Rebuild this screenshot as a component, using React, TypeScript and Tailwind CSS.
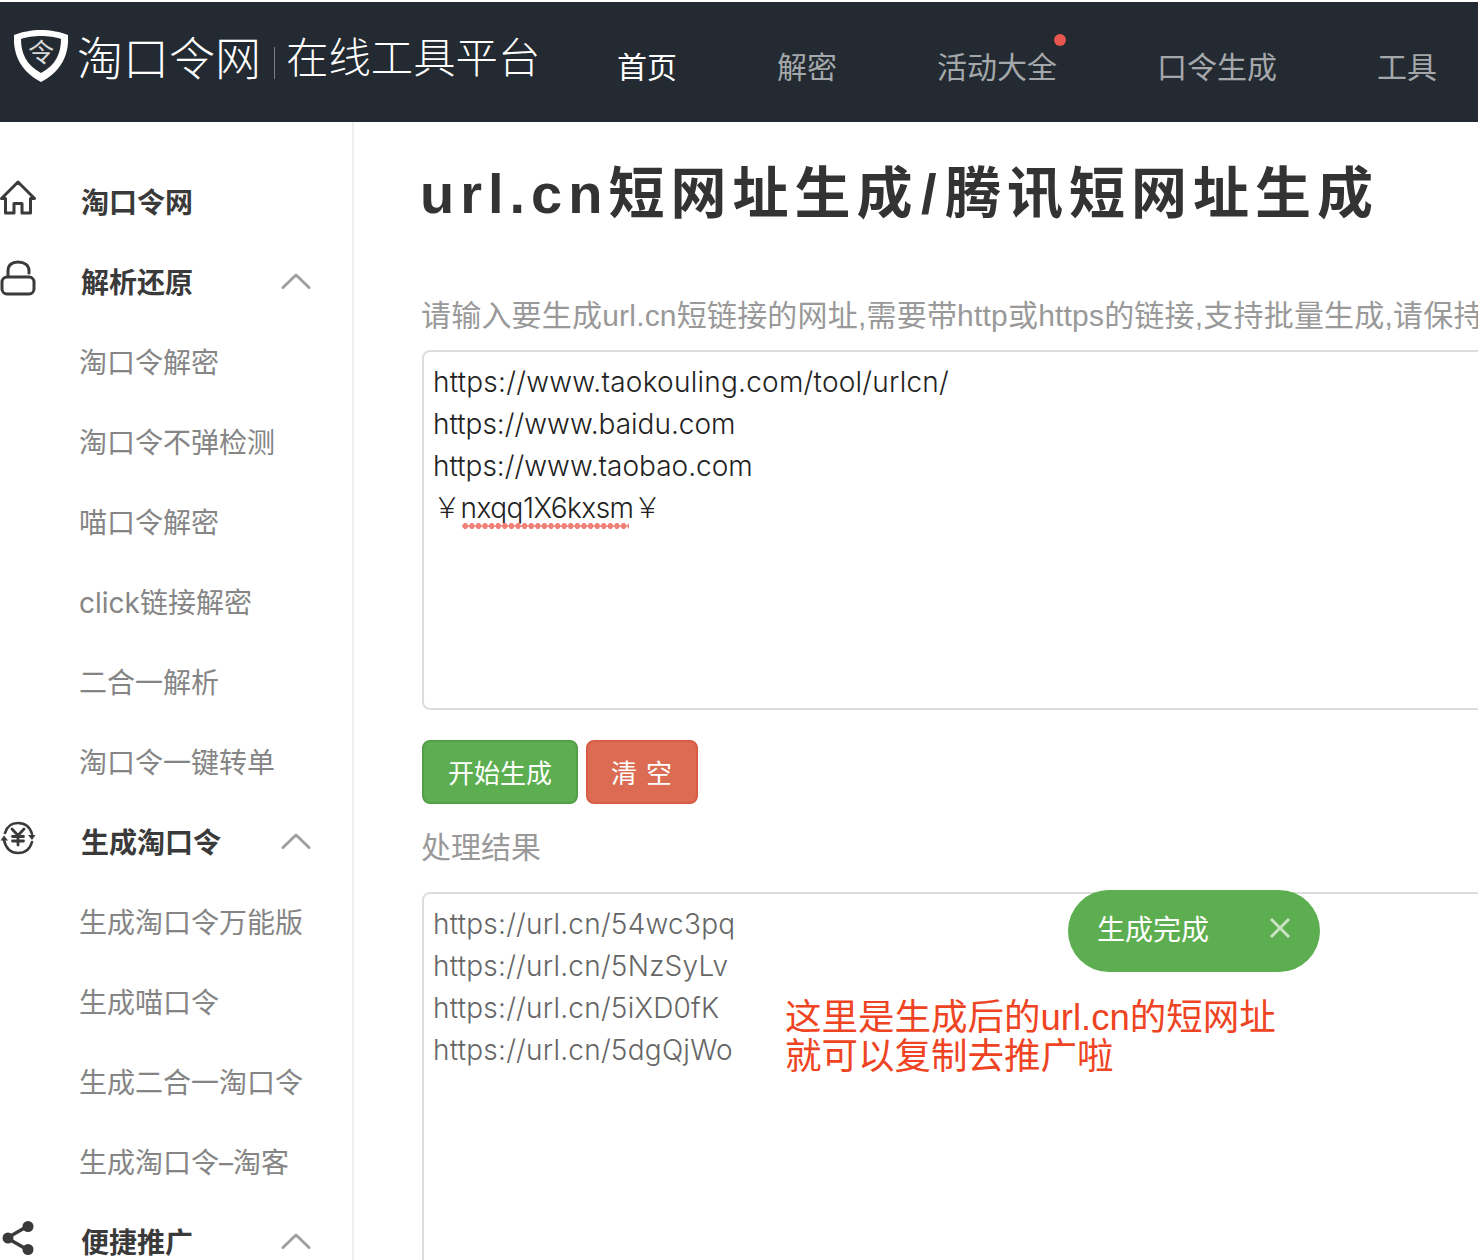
import React from 'react';

const FONT = "font-['Liberation_Sans','Noto_Sans_CJK_SC',sans-serif]";
const LATIN_WIDE = "font-['Inter','Noto_Sans_CJK_SC',sans-serif]";

function HomeIcon() {
  return (
    <svg viewBox="0 0 36 36" className="h-9 w-9" fill="none" stroke="#3a3a3a" strokeWidth="3" strokeLinejoin="round" strokeLinecap="round">
      <path d="M1.5 18.5 L18 2 L34.5 18.5 L30.5 18.5 L30.5 33 L22 33 L22 23.5 L14 23.5 L14 33 L5.5 33 L5.5 18.5 Z" />
    </svg>
  );
}

function LockIcon() {
  return (
    <svg viewBox="0 0 36 36" className="h-9 w-9" fill="none" stroke="#3a3a3a" strokeWidth="3" strokeLinecap="round">
      <rect x="2" y="17" width="32" height="17" rx="5" />
      <path d="M8 16 V11 C8 5 12 2 18 2 C24 2 29 5 29 11 V13" />
    </svg>
  );
}

function YenIcon() {
  return (
    <svg viewBox="0 0 36 36" className="h-9 w-9" fill="none" stroke="#3a3a3a" strokeWidth="2.6" strokeLinecap="round">
      <path d="M5 13 C7 6 12 3 18 3 C25 3 30 7 32 14" />
      <path d="M32 22 C30 29 25 33 18 33 C11 33 6 29 4 20" />
      <path d="M0.5 20.5 H8 L4 15.5 Z M28 15 H35.5 L32 20 Z" fill="#3a3a3a" stroke="none" />
      <path d="M12 9 L18 15.5 L24 9 M18 15.5 V25 M12.5 16.5 H23.5 M12.5 21 H23.5" strokeWidth="2.8" />
    </svg>
  );
}

function ShareIcon() {
  return (
    <svg viewBox="0 0 36 36" className="h-9 w-9" fill="#3a3a3a" stroke="#3a3a3a">
      <path d="M7 18 L28 6 M7 18 L28 30" strokeWidth="3.4" fill="none" />
      <circle cx="8" cy="18" r="5.5" stroke="none" />
      <circle cx="28" cy="6.5" r="5.5" stroke="none" />
      <circle cx="28" cy="29.5" r="5.5" stroke="none" />
    </svg>
  );
}

function Chevron() {
  return (
    <svg viewBox="0 0 30 16" className="h-4 w-[30px]" fill="none" stroke="#a0a0a0" strokeWidth="3" strokeLinecap="round" strokeLinejoin="round">
      <path d="M2 14.5 L15 2 L28 14.5" />
    </svg>
  );
}

function LogoShield() {
  return (
    <svg viewBox="0 0 54 54" className="mb-[6px] h-[54px] w-[54px] shrink-0">
      <path d="M27 1 C36 1 47 3 54 6 C55 22 50 41 27 53 C4 41 -1 22 0 6 C7 3 18 1 27 1 Z" fill="#fff" />
      <path d="M27 7 C34 7 42 8 47 10 C47 24 42 36 27 44 C12 36 7 24 7 10 C12 8 20 7 27 7 Z" fill="#232a31" />
      <text x="27" y="33" textAnchor="middle" fontSize="26" fill="#d8d8d8" fontFamily="'Noto Sans CJK SC'">令</text>
    </svg>
  );
}

const NAV = [
  { label: '首页', active: true },
  { label: '解密' },
  { label: '活动大全', dot: true },
  { label: '口令生成' },
  { label: '工具' },
];

function Header() {
  return (
    <header className="flex h-[120px] items-center overflow-hidden bg-[#232a31]">
      <div className="flex w-[617px] shrink-0 items-center pl-[14px] pb-[6px]">
        <LogoShield />
        <span className="ml-[9px] whitespace-nowrap text-[46px] font-light leading-none text-white">淘口令网</span>
        <span className="ml-[13px] mr-[11px] mt-2 h-8 w-px bg-[#7b8085]" />
        <span className="whitespace-nowrap text-[42.4px] font-light leading-none text-white">在线工具平台</span>
      </div>
      <nav className="flex items-center gap-[100px] pt-3">
        {NAV.map(item => (
          <span
            key={item.label}
            className={`relative whitespace-nowrap text-[30px] leading-[40px] ${item.active ? 'text-white' : 'text-[#a5a8ab]'}`}
          >
            {item.label}
            {item.dot && <i className="absolute right-[-9px] top-[-14px] h-3 w-3 rounded-full bg-[#e8574e]" />}
          </span>
        ))}
      </nav>
    </header>
  );
}

function GroupRow({ icon, label, open }: { icon: React.ReactNode; label: string; open?: boolean }) {
  return (
    <div className="flex h-20 items-center">
      <span className="mb-3 flex w-[81px] shrink-0 items-center">{icon}</span>
      <span className="flex-1 whitespace-nowrap text-[28px] font-bold text-[#3a3a3a]">{label}</span>
      {open && <span className="mb-[6px] mr-[41px] flex"><Chevron /></span>}
    </div>
  );
}

function SubRow({ label }: { label: string }) {
  return <div className={`${LATIN_WIDE} flex h-20 items-center whitespace-nowrap pb-[2px] pl-[79px] text-[28px] text-[#858585]`}>{label}</div>;
}

function Sidebar() {
  return (
    <aside className="h-full w-[354px] shrink-0 border-r-2 border-[#eeeeee] pt-[42px]">
      <GroupRow icon={<HomeIcon />} label="淘口令网" />
      <GroupRow icon={<LockIcon />} label="解析还原" open />
      {['淘口令解密', '淘口令不弹检测', '喵口令解密', 'click链接解密', '二合一解析', '淘口令一键转单'].map(s => (
        <SubRow key={s} label={s} />
      ))}
      <GroupRow icon={<YenIcon />} label="生成淘口令" open />
      {['生成淘口令万能版', '生成喵口令', '生成二合一淘口令', '生成淘口令–淘客'].map(s => (
        <SubRow key={s} label={s} />
      ))}
      <GroupRow icon={<ShareIcon />} label="便捷推广" open />
    </aside>
  );
}

function Main() {
  return (
    <main className="relative min-w-0 flex-1 overflow-hidden pl-[68px]">
      <h1 className="-ml-[2px] mt-[42px] h-[60px] whitespace-nowrap text-[56px] font-bold leading-[60px] tracking-[6px] text-[#333333]">
        url.cn短网址生成<span className="mx-[2.5px]">/</span>腾讯短网址生成
      </h1>
      <p className="-ml-px mt-[72px] h-10 whitespace-nowrap text-[30px] leading-10 tracking-[0.2px] text-[#999999]">
        请输入要生成url.cn短链接的网址,需要带http或https的链接,支持批量生成,请保持
      </p>
      <div className={`${LATIN_WIDE} mr-[-20px] mt-[14px] h-[360px] rounded-lg border-2 border-[#dddddd] px-[9px] pb-[10px] pt-[9px] text-[28px] font-light leading-[42px] text-[#222222]`}>
        <div className="tracking-[0.24px]">https://www.taokouling.com/tool/urlcn/</div>
        <div>https://www.baidu.com</div>
        <div>https://www.taobao.com</div>
        <div className="relative tracking-[-0.5px]">
          ￥nxqq1X6kxsm￥
          <i className="absolute left-[29px] top-[36px] h-[6px] w-[167px] bg-[radial-gradient(circle,#f08078_2.8px,transparent_3.2px)] bg-[length:6.6px_6px]" />
        </div>
      </div>
      <div className="mt-[30px] flex gap-2">
        <button className="h-16 w-[156px] rounded-lg border-2 border-[#52a047] bg-[#5dae50] pt-1 text-[26px] text-white">开始生成</button>
        <button className="h-16 w-[112px] rounded-lg border-2 border-[#d95c44] bg-[#dc6b53] pt-1 text-[26px] tracking-[1px] text-white">清 空</button>
      </div>
      <p className="-ml-px mt-6 h-10 text-[30px] leading-10 text-[#999999]">处理结果</p>
      <div className={`${LATIN_WIDE} mr-[-20px] mt-6 h-[400px] rounded-lg border-2 border-[#dddddd] px-[9px] pb-[10px] pt-[9px] text-[28px] font-light leading-[42px] tracking-[0.23px] text-[#666666]`}>
        <div>https://url.cn/54wc3pq</div>
        <div>https://url.cn/5NzSyLv</div>
        <div>https://url.cn/5iXD0fK</div>
        <div>https://url.cn/5dgQjWo</div>
      </div>
      {/* toast */}
      <div className="absolute left-[714px] top-[768px] flex h-[82px] w-[252px] items-center justify-between rounded-full bg-[#5dae50] pl-[29px] pr-[28px]">
        <span className="text-[28px] text-white">生成完成</span>
        <svg viewBox="0 0 24 24" className="mb-[6px] h-6 w-6" fill="none" stroke="#c8e4c3" strokeWidth="3">
          <path d="M3 3 L21 21 M21 3 L3 21" />
        </svg>
      </div>
      {/* annotation drawn on the screenshot */}
      <div className="absolute left-[431px] top-[876px] whitespace-nowrap text-[36.5px] leading-[39px] text-[#ef4423]">
        <div>这里是生成后的url.cn的短网址</div>
        <div>就可以复制去推广啦</div>
      </div>
    </main>
  );
}

export default function App() {
  return (
    <div className={`${FONT} h-[1260px] w-[1478px] overflow-hidden bg-white pt-[2px]`}>
      <Header />
      <div className="flex h-[1138px]">
        <Sidebar />
        <Main />
      </div>
    </div>
  );
}
